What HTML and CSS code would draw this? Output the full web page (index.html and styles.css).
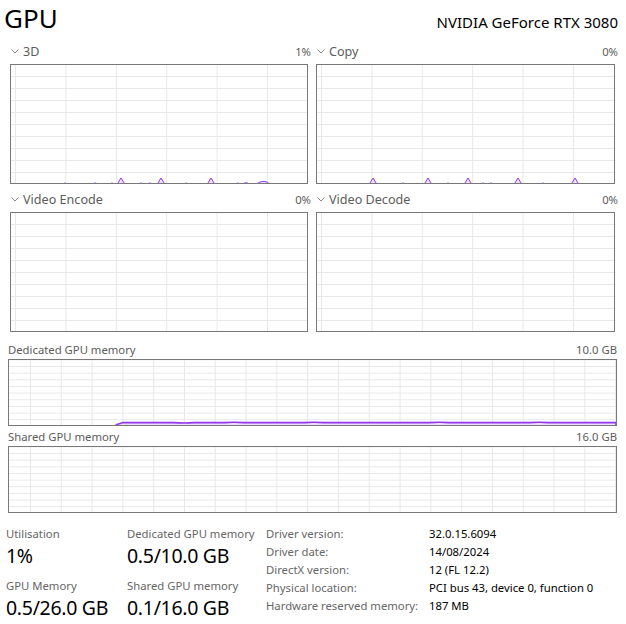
FILE: index.html
```html
<!DOCTYPE html>
<html lang="en">
<head>
<meta charset="utf-8">
<title>GPU</title>
<link rel="stylesheet" href="styles.css">
</head>
<body>
<div class="page">
  <header class="head">
    <h1 class="title">GPU</h1>
    <div class="model">NVIDIA GeForce RTX 3080</div>
  </header>

  <section class="engines">
    <div class="engine">
      <div class="engine-head">
        <span class="engine-name"><svg class="chev" viewBox="0 0 8 5"><polyline points="0.5,0.5 4,4 7.5,0.5"/></svg>3D</span>
        <span class="engine-pct">1%</span>
      </div>
      <div class="graph">
        <svg class="plot" viewBox="0 0 296 118" preserveAspectRatio="none"><path class="usage" d="M0,119.5 L50,119.5 Q54,116.5 58,119.5 L78,119.5 Q84,116.5 90,119.5 L97,119.5 Q101,116.5 105,119.5 L106,119.5 L110,113 L114,119.5 L126,119.5 Q130,116.5 134,119.5 Q139,116.5 144,119.5 L146,119.5 L150,113 L154,119.5 L171,119.5 Q175,116.5 179,119.5 L196,119.5 L200,113 L204,119.5 L223,119.5 Q227,116.5 231,119.5 Q235,116 239,119.5 L245,119.5 Q250,115 256,117 L259,119.5 L296,119.5 Z"/></svg>
      </div>
    </div>
    <div class="engine">
      <div class="engine-head">
        <span class="engine-name"><svg class="chev" viewBox="0 0 8 5"><polyline points="0.5,0.5 4,4 7.5,0.5"/></svg>Copy</span>
        <span class="engine-pct">0%</span>
      </div>
      <div class="graph">
        <svg class="plot" viewBox="0 0 297 118" preserveAspectRatio="none"><path class="usage" d="M0,119.5 L52,119.5 L56,113 L60,119.5 L82,119.5 Q86,116.5 90,119.5 L107,119.5 L111,113 L115,119.5 L127,119.5 Q131,116.5 135,119.5 L147,119.5 L151,113 L155,119.5 L162,119.5 Q166,116.5 170,119.5 Q174,116.5 178,119.5 L197,119.5 L201,113 L205,119.5 L222,119.5 Q226,116.5 230,119.5 L254,119.5 L258,113 L262,119.5 L297,119.5 Z"/></svg>
      </div>
    </div>
    <div class="engine">
      <div class="engine-head">
        <span class="engine-name"><svg class="chev" viewBox="0 0 8 5"><polyline points="0.5,0.5 4,4 7.5,0.5"/></svg>Video Encode</span>
        <span class="engine-pct">0%</span>
      </div>
      <div class="graph"></div>
    </div>
    <div class="engine">
      <div class="engine-head">
        <span class="engine-name"><svg class="chev" viewBox="0 0 8 5"><polyline points="0.5,0.5 4,4 7.5,0.5"/></svg>Video Decode</span>
        <span class="engine-pct">0%</span>
      </div>
      <div class="graph"></div>
    </div>
  </section>

  <section class="memory">
    <div class="mem-head"><span>Dedicated GPU memory</span><span>10.0 GB</span></div>
    <div class="graph mem-graph">
      <svg class="plot" viewBox="0 0 607 65" preserveAspectRatio="none"><path class="usage mem-line" d="M0,67 L104,67 L108,64.5 L114,62.6 L165,62.6 Q175,63.4 185,62.6 L215,62.6 Q225,61.8 235,62.6 L295,62.6 Q305,61.8 315,62.6 L420,62.6 Q430,61.8 440,62.6 L520,62.6 Q530,61.8 540,62.6 L607,62.6 L607,67 Z"/></svg>
    </div>
    <div class="mem-head"><span>Shared GPU memory</span><span>16.0 GB</span></div>
    <div class="graph mem-graph"></div>
  </section>

  <section class="stats">
    <div class="stat-col">
      <div class="stat">
        <div class="stat-label">Utilisation</div>
        <div class="stat-value">1%</div>
      </div>
      <div class="stat">
        <div class="stat-label">GPU Memory</div>
        <div class="stat-value">0.5/26.0 GB</div>
      </div>
    </div>
    <div class="stat-col stat-col-2">
      <div class="stat">
        <div class="stat-label">Dedicated GPU memory</div>
        <div class="stat-value">0.5/10.0 GB</div>
      </div>
      <div class="stat">
        <div class="stat-label">Shared GPU memory</div>
        <div class="stat-value">0.1/16.0 GB</div>
      </div>
    </div>
    <dl class="info">
      <dt>Driver version:</dt><dd>32.0.15.6094</dd>
      <dt>Driver date:</dt><dd>14/08/2024</dd>
      <dt>DirectX version:</dt><dd>12 (FL 12.2)</dd>
      <dt>Physical location:</dt><dd>PCI bus 43, device 0, function 0</dd>
      <dt>Hardware reserved memory:</dt><dd>187 MB</dd>
    </dl>
  </section>
</div>
</body>
</html>
```

FILE: styles.css
```css
* { box-sizing: border-box; }

html, body {
  margin: 0;
  padding: 0;
  background: #ffffff;
}

body {
  font-family: "Segoe UI", "Noto Sans", "Open Sans", sans-serif;
  color: #000;
  width: 626px;
  height: 624px;
  overflow: hidden;
}

.head {
  display: flex;
  justify-content: space-between;
  align-items: flex-end;
  height: 36px;
  padding: 0 8px 0 4px;
}

.title {
  margin: 0;
  font-size: 26px;
  font-weight: 400;
  line-height: 36px;
}

.model {
  font-size: 15px;
  line-height: 20px;
  margin-bottom: 4px;
}

.engines {
  display: grid;
  grid-template-columns: 298px 299px;
  column-gap: 8px;
  padding: 0 11px 0 10px;
}

.engine-head {
  display: flex;
  justify-content: space-between;
  align-items: center;
  height: 28px;
  padding-top: 2px;
  margin-right: -3px;
  color: #5c5c5c;
}

.engine-name {
  display: flex;
  align-items: center;
  font-size: 12.6px;
}

.chev {
  width: 8px;
  height: 5px;
  margin: 0 4px 0 1px;
  fill: none;
  stroke: #8a8a8a;
  stroke-width: 1;
}

.engine-pct {
  font-size: 11.3px;
}

.graph {
  height: 120px;
  border: 1px solid #787878;
  background-color: #fff;
  background-image:
    linear-gradient(90deg, #e8e8e8 1px, transparent 1px),
    linear-gradient(180deg, #e8e8e8 1px, transparent 1px);
  background-size: 50.4px 100%, 100% 12px;
  background-position: 4px 0, 0 11px;
  overflow: hidden;
}

.plot {
  display: block;
  width: 100%;
  height: 100%;
}

.usage {
  fill: #ece0fa;
  stroke: #9138ec;
  stroke-width: 1;
}

.memory {
  padding: 7px 9px 0 8px;
}

.mem-head {
  display: flex;
  justify-content: space-between;
  align-items: center;
  height: 20px;
  padding-top: 1px;
  font-size: 11.3px;
  color: #5c5c5c;
}

.mem-graph {
  height: 67px;
  background-size: 30.8px 100%, 100% 6.67px;
  background-position: 21px 0, 0 6px;
}

.mem-line {
  stroke-width: 1.6;
}

.stats {
  display: flex;
  align-items: flex-start;
  padding: 11px 0 0 6px;
}

.stat-col {
  width: 121px;
  display: flex;
  flex-direction: column;
}

.stat-col-2 {
  width: 139px;
}

.stat {
  height: 52px;
}

.stat-label {
  font-size: 11.3px;
  line-height: 18px;
  padding-top: 1px;
  color: #666;
}

.stat-value {
  font-size: 19.5px;
  letter-spacing: -0.3px;
  line-height: 26px;
}

.info {
  margin: 0;
  display: grid;
  grid-template-columns: 163px auto;
  align-content: start;
  font-size: 11.3px;
  line-height: 18px;
  padding-top: 1px;
}

.info dt {
  color: #666;
}

.info dd {
  margin: 0;
  color: #000;
}
```
